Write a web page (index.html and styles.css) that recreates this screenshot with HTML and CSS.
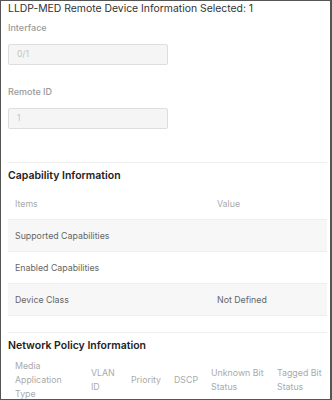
FILE: index.html
```html
<!DOCTYPE html>
<html>
<head>
<meta charset="utf-8">
<link rel="stylesheet" href="styles.css">
</head>
<body>
<div class="frame">
  <h1 class="title">LLDP-MED Remote Device Information Selected: 1</h1>
  <div class="field">
    <div class="label">Interface</div>
    <div class="input">0/1</div>
  </div>
  <div class="field">
    <div class="label">Remote ID</div>
    <div class="input">1</div>
  </div>
  <section class="section">
    <h2 class="heading">Capability Information</h2>
    <div class="cap-table">
      <div class="row head"><div class="cell">Items</div><div class="cell">Value</div></div>
      <div class="row odd"><div class="cell">Supported Capabilities</div><div class="cell"></div></div>
      <div class="row"><div class="cell">Enabled Capabilities</div><div class="cell"></div></div>
      <div class="row odd"><div class="cell">Device Class</div><div class="cell">Not Defined</div></div>
    </div>
  </section>
  <section class="section section2">
    <h2 class="heading">Network Policy Information</h2>
    <div class="net-table">
      <div class="ncell">Media Application Type</div>
      <div class="ncell">VLAN ID</div>
      <div class="ncell mid">Priority</div>
      <div class="ncell mid">DSCP</div>
      <div class="ncell">Unknown Bit Status</div>
      <div class="ncell">Tagged Bit Status</div>
    </div>
  </section>
</div>
</body>
</html>
```
FILE: styles.css
```css
html, body {
  margin: 0;
  padding: 0;
  background: #fff;
}
.frame {
  width: 332px;
  height: 400px;
  box-sizing: border-box;
  border: 1px solid #555;
  border-right-width: 2px;
  overflow: hidden;
  padding: 1px 3px 0 7px;
  font-family: Inter, "Noto Sans", sans-serif;
}
.title {
  margin: 0;
  font-size: 10.4px;
  line-height: 14px;
  font-weight: 400;
  color: #333;
}
.field {
  margin-top: 5px;
}
.field + .field {
  margin-top: 20px;
}
.label {
  font-size: 9px;
  line-height: 14px;
  font-weight: 500;
  color: #9a9a9a;
}
.input {
  margin-top: 9px;
  width: 160px;
  height: 21px;
  box-sizing: border-box;
  background: #f5f5f5;
  border: 1px solid #ddd;
  border-radius: 2px;
  font-size: 8.5px;
  line-height: 19px;
  padding-left: 8px;
  color: #c4c4c4;
}
.section {
  margin-top: 33px;
  border-top: 1px solid #eee;
  padding-top: 5px;
}
.section2 {
  margin-top: 16px;
}
.heading {
  margin: 0;
  font-size: 10.5px;
  line-height: 16px;
  font-weight: 600;
  color: #222;
}
.cap-table {
  margin-top: 4px;
}
.row {
  display: grid;
  grid-template-columns: 202px 1fr;
  height: 32px;
  align-items: center;
  border-bottom: 1px solid #eee;
  box-sizing: border-box;
  font-size: 8.8px;
  color: #666;
}
.row.head {
  color: #aaa;
}
.row.odd {
  background: #f7f7f7;
}
.cell {
  padding-left: 7px;
}
.net-table {
  margin-top: 5px;
  display: grid;
  grid-template-columns: 76px 40px 43px 37px 66px 1fr;
  align-items: center;
  font-size: 8.8px;
  line-height: 14px;
  color: #aaa;
}
.ncell {
  padding-left: 7px;
  padding-right: 3px;
}
```
